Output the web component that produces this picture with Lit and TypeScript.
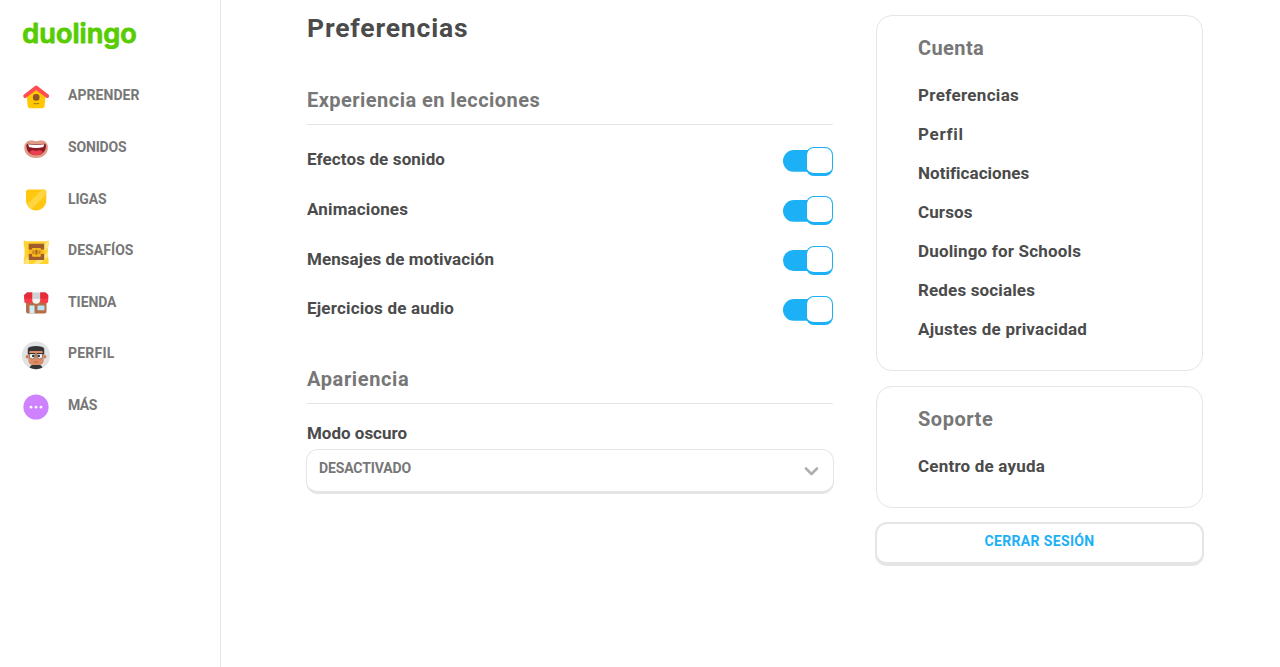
import { LitElement, html, svg, css } from "lit";
import { customElement, property } from "lit/decorators.js";

/** Text set to a fixed measure by spreading its letters. */
@customElement("fit-text")
class FitText extends LitElement {
  @property() text = "";
  @property({ type: Number }) measure = 0;

  static styles = css`
    :host { display: block; white-space: nowrap; }
    .t { display: inline-block; }
  `;

  updated() {
    const el = this.renderRoot.querySelector(".t") as HTMLElement;
    el.style.letterSpacing = "0px";
    const natural = el.getBoundingClientRect().width;
    el.style.letterSpacing = `${(this.measure - natural) / (this.text.length - 0.5)}px`;
  }

  render() {
    return html`<span class="t">${this.text}</span>`;
  }
}

const icons = {
  learn: svg`
    <path d="M4.800 12.500 14 5l9.600 7.500-1 10.400a2.500 2.500 0 0 1-2.500 2.300H8.200a2.500 2.500 0 0 1-2.500-2.300z" fill="#ffc800"/>
    <path d="M3.200 13 14.200 4.600l11 8.400" fill="none" stroke="#ff4f55" stroke-width="4" stroke-linecap="round" stroke-linejoin="round"/>
    <circle cx="14.200" cy="14.400" r="3.300" fill="#8f5232"/>
    <path d="M12 20.600h4.600" stroke="#b98512" stroke-width="1.400" stroke-linecap="round"/>`,
  sounds: svg`
    <path d="M2.300 12.500C2.300 8 5.500 5.600 9 5.600c2 0 3 .7 5.200.7s3.200-.7 5.200-.7c3.500 0 6.500 2.400 6.500 6.900 0 6-4.500 10.500-11.800 10.500S2.300 18.500 2.300 12.500z" fill="#e09a86"/>
    <path d="M4.400 10q.8-1.500 2.800-1.200 7 1.200 14 0 2-.3 2.800 1.200c.3 6.500-4 10.200-9.800 10.200S4.100 16.500 4.400 10z" fill="#8c1a22"/>
    <path d="M6.200 9.300q8 1.500 16 0l-.8 2.700q-7.200 1.800-14.400 0z" fill="#fff"/>
    <path d="M7.500 17.300c1.800-2.600 4.200-2.300 6.700-1.200 2.500-1.100 4.900-1.300 6.700 1.200-1.700 2.200-4 2.800-6.700 2.800s-5-.6-6.700-2.800z" fill="#ec3f50"/>`,
  leagues: svg`
    <path d="M6.500 3.500h15.300A2.500 2.500 0 0 1 24.300 6v8c0 6-4.700 10.500-10.200 10.500S4 20 4 14V6a2.500 2.500 0 0 1 2.500-2.500z" fill="#ffc70f"/>
    <path d="M5.100 18.600 20.200 3.500h1.600A2.500 2.500 0 0 1 24.300 6v2.400L9.500 23.200q-3-1.600-4.400-4.600z" fill="#ffd540"/>`,
  quests: svg`
    <path d="M1.800 2.300q2 1.600 4 .9h16.700q2 .7 4-.9v5.200l-.7 2v9l.7 2v5.500H1.800v-5.500l.7-2v-9l-.7-2z" fill="#ffd22e"/>
    <path d="M2.500 22.500 7 18v8H2.500zM21.500 7 26.500 2.300v5.200l-.7 2-4.300 4.500zM11 26 25.800 14v5L17 26z" fill="#ffe680"/>
    <path d="M6.700 5.800h15.500v6h-3.700V10h-8.100v1.800H6.700zM6.700 15.700h3.700V18.500h8.100v-2.800h3.700v6.300H6.700z" fill="#a05a2c"/>
    <path d="M6.700 11.800h3.700V10h8.100v1.800h3.700v3.900h-3.700v2.800h-8.100v-2.800H6.700z" fill="#f8b81a"/>
    <path d="M10.400 12.500h2.100v3.500h-2.100zM16.400 12.500h2.100v3.500h-2.100z" fill="#c98421"/>
    <rect x="13.300" y="11.800" width="2.300" height="5" rx=".8" fill="#a8691c"/>`,
  shop: svg`
    <path d="M4 10h20.500v12.500a2 2 0 0 1-2 2H6a2 2 0 0 1-2-2z" fill="#b66e46"/>
    <rect x="7.500" y="16.500" width="5" height="8" fill="#c9edfb"/>
    <rect x="15.500" y="16.500" width="7" height="4.800" rx=".6" fill="#b9e3fa"/>
    <path d="M5 3.500h5.300v8.300a2.500 2.500 0 0 1-2.500 2.500H4.700a2.500 2.500 0 0 1-2.500-2.500V6z" fill="#fa3c48"/>
    <path d="M18.200 3.500h5.300L26.200 6v5.800a2.500 2.500 0 0 1-2.500 2.500h-3a2.500 2.500 0 0 1-2.500-2.500z" fill="#fa3c48"/>
    <path d="M10.300 3.500h7.900v7.300a3.950 3.950 0 0 1-7.900 0z" fill="#f5f4f5"/>
    <path d="M10.300 3.500h7.900v6.500h-7.900z" fill="#d0d2d4"/>
    <path d="M5 3.500h5.300v6.300H2.200V6zM18.200 3.500h5.300L26.200 6v3.800h-8z" fill="#e52c3b"/>`,
  profile: svg`
    <circle cx="14" cy="14.500" r="14" fill="#e1e2e3"/>
    <path d="M7.500 26.500q1.500-3.300 6.500-3.300t6.500 3.300a14 14 0 0 1-6.500 1.800 14 14 0 0 1-6.500-1.800z" fill="#333436"/>
    <circle cx="5.300" cy="15.800" r="1.700" fill="#c97b56"/><circle cx="22.700" cy="15.800" r="1.700" fill="#c97b56"/>
    <path d="M6.300 9.500h15.400V19q0 5-5 5h-5.400q-5 0-5-5z" fill="#dc8c66"/>
    <path d="M5.800 13.500V8q.3-2 2.500-2.300Q14 4.100 19.700 5.700q2.300.3 2.500 2.300v5.500h-1.100l-.7-3.600H7.600l-.7 3.600z" fill="#343437"/>
    <path d="M7.500 12.700h5.500v3q0 2.200-2.700 2.200t-2.800-2.200zM15 12.700h5.500v3q0 2.200-2.800 2.200T15 15.700z" fill="#f2f2f2" stroke="#6b5a55" stroke-width=".7"/>
    <path d="M7.200 12.500h6M14.800 12.500h6" stroke="#3b3534" stroke-width="1.200"/>
    <circle cx="11.300" cy="15" r="1.300" fill="#333"/><circle cx="16.700" cy="15" r="1.300" fill="#333"/>
    <path d="M12.300 20.800q1.700.8 3.400 0" stroke="#a75c3f" fill="none" stroke-width=".8"/>`,
  more: svg`
    <circle cx="14" cy="14" r="12.600" fill="#ce82ff"/>
    <circle cx="9" cy="14.200" r="1.350" fill="#fff"/><circle cx="14" cy="14.200" r="1.350" fill="#fff"/><circle cx="19" cy="14.200" r="1.350" fill="#fff"/>`,
};

const nav = [
  { icon: icons.learn, text: "APRENDER", w: 71.5 },
  { icon: icons.sounds, text: "SONIDOS", w: 58.5 },
  { icon: icons.leagues, text: "LIGAS", w: 38.5 },
  { icon: icons.quests, text: "DESAFÍOS", w: 65.5 },
  { icon: icons.shop, text: "TIENDA", w: 48.5 },
  { icon: icons.profile, text: "PERFIL", w: 46.5 },
  { icon: icons.more, text: "MÁS", w: 29 },
];

const options = [
  { text: "Efectos de sonido", w: 138 },
  { text: "Animaciones", w: 101 },
  { text: "Mensajes de motivación", w: 187 },
  { text: "Ejercicios de audio", w: 147 },
];

const links = [
  { text: "Preferencias", w: 101 },
  { text: "Perfil", w: 45 },
  { text: "Notificaciones", w: 111 },
  { text: "Cursos", w: 54.5 },
  { text: "Duolingo for Schools", w: 163 },
  { text: "Redes sociales", w: 117 },
  { text: "Ajustes de privacidad", w: 169 },
];

@customElement("app-root")
class AppRoot extends LitElement {
  static styles = css`
    :host {
      display: flex;
      height: 667px;
      overflow: hidden;
      background: #fff;
      color: #4b4b4b;
      font-family: Roboto, "Liberation Sans", sans-serif;
      font-weight: 700;
    }
    * { box-sizing: border-box; }
    .side { width: 221px; border-right: 1px solid #e5e5e5; padding: 15px 0 0 22px; flex: none; }
    .logo { display: block; height: 56.2px; width: 130px; }
    .word { font: 600 26.500px Inter, sans-serif; fill: #58cc02; stroke: #58cc02; stroke-width: .9; stroke-linejoin: round; }
    .item { display: flex; align-items: center; gap: 18px; height: 51.6px; color: #777; font-size: 14px; line-height: 20px; }
    .icon { width: 28px; height: 28px; flex: none; }
    .item fit-text { padding-bottom: 3.300px; }
    .main { width: 526px; margin-left: 86px; flex: none; }
    .title { margin: 0; padding-top: 12px; font-size: 26.500px; line-height: 32px; }
    h2 { margin: 0; color: #777; font-size: 20px; line-height: 24px; font-weight: 700; }
    .main h2 { height: 37px; border-bottom: 1px solid #e5e5e5; }
    .first { margin-top: 44px; }
    .second { margin-top: 32px; }
    .options { padding-top: 11px; }
    .row { display: flex; align-items: center; justify-content: space-between; height: 49.700px; font-size: 17px; line-height: 24px; }
    .row fit-text { padding-bottom: 3px; }
    .switch { width: 50.500px; height: 29px; padding: 3.500px 0; margin-top: 1px; }
    .track { display: flex; justify-content: flex-end; align-items: center; height: 21.500px; border-radius: 11px 0 0 11px; background: linear-gradient(#1cb0f6, #1cb0f6) left / 34px 100% no-repeat; }
    .knob { flex: none; width: 27px; height: 29px; border: 1.500px solid #1cb0f6; border-bottom-width: 3px; border-radius: 8px; background: #fff; }
    .field { font-size: 17px; line-height: 24px; padding-top: 17px; }
    .select { display: flex; justify-content: space-between; align-items: center; height: 45px; margin: 4px -1px 0; padding: 0 14px 4px 12px; border: 1px solid #e5e5e5; border-bottom-width: 3px; border-radius: 12px; color: #777; font-size: 14px; line-height: 20px; }
    .chev { width: 16px; height: 16px; margin-top: 5px; }
    .aside { width: 329px; margin-left: 42px; padding-top: 15px; flex: none; }
    .card { margin: 0 1px; border: 1px solid #e5e5e5; border-radius: 16px; padding: 20px 40px 0 41px; }
    .account { height: 356px; }
    .support { height: 122px; margin-top: 15px; }
    .links { padding-top: 16px; font-size: 17px; line-height: 39px; }
    .logout { display: flex; justify-content: center; align-items: flex-start; height: 43.500px; width: 100%; margin-top: 14px; padding: 7px 0 0; border: 2px solid #e5e5e5; border-bottom-width: 4px; border-radius: 12px; background: #fff; color: #1cb0f6; font: inherit; font-size: 14px; line-height: 20px; }
  `;

  render() {
    return html`
      <nav class="side">
        <svg class="logo" viewBox="0 0 130 56.2">
          <text class="word" x="0.300" y="27.800" textLength="114.500" lengthAdjust="spacingAndGlyphs">duolingo</text>
        </svg>
        ${nav.map((n) => html`
          <div class="item">
            <svg class="icon" viewBox="0 0 28 28" overflow="visible">${n.icon}</svg>
            <fit-text .text=${n.text} .measure=${n.w}></fit-text>
          </div>`)}
      </nav>
      <main class="main">
        <h1 class="title"><fit-text .text=${"Preferencias"} .measure=${161}></fit-text></h1>
        <h2 class="first"><fit-text .text=${"Experiencia en lecciones"} .measure=${233}></fit-text></h2>
        <div class="options">
          ${options.map((o) => html`
            <div class="row">
              <fit-text .text=${o.text} .measure=${o.w}></fit-text>
              <div class="switch"><div class="track"><div class="knob"></div></div></div>
            </div>`)}
        </div>
        <h2 class="second"><fit-text .text=${"Apariencia"} .measure=${102}></fit-text></h2>
        <div class="field"><fit-text .text=${"Modo oscuro"} .measure=${100}></fit-text></div>
        <div class="select">
          <fit-text .text=${"DESACTIVADO"} .measure=${92}></fit-text>
          <svg class="chev" viewBox="0 0 16 16"><path d="M3 5.500 8.500 11 14 5.500" fill="none" stroke="#afafaf" stroke-width="2.600" stroke-linecap="round" stroke-linejoin="round"/></svg>
        </div>
      </main>
      <aside class="aside">
        <section class="card account">
          <h2><fit-text .text=${"Cuenta"} .measure=${66}></fit-text></h2>
          <div class="links">${links.map((l) => html`<fit-text .text=${l.text} .measure=${l.w}></fit-text>`)}</div>
        </section>
        <section class="card support">
          <h2><fit-text .text=${"Soporte"} .measure=${75}></fit-text></h2>
          <div class="links"><fit-text .text=${"Centro de ayuda"} .measure=${127}></fit-text></div>
        </section>
        <button class="logout"><fit-text .text=${"CERRAR SESIÓN"} .measure=${110}></fit-text></button>
      </aside>`;
  }
}
